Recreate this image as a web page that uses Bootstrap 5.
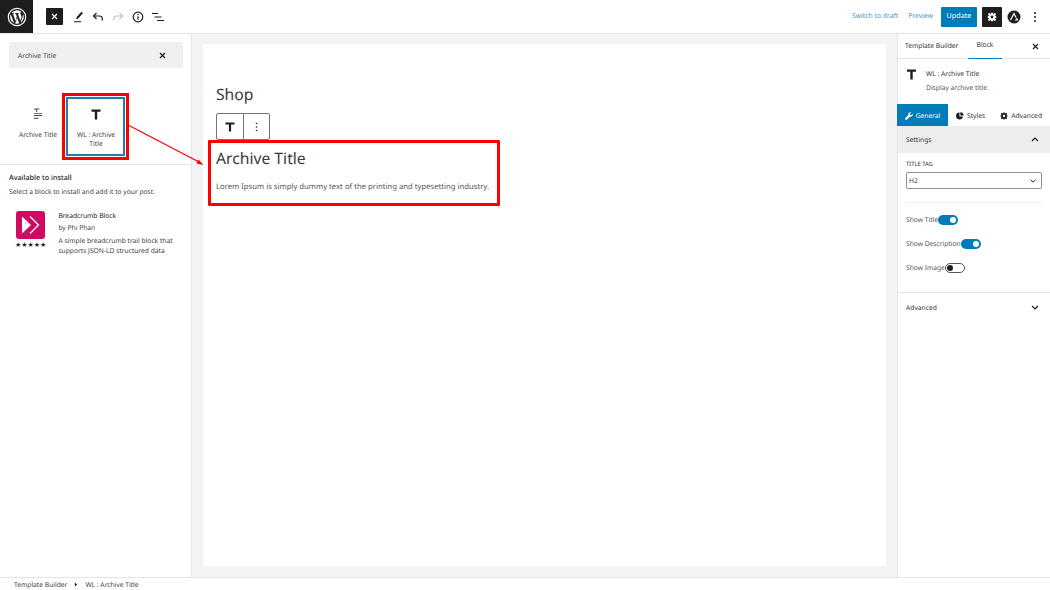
<!DOCTYPE html>
<html lang="en">
<head>
  <meta charset="UTF-8">
  <meta name="viewport" content="width=device-width, initial-scale=1.0">
  <title>Edit Template</title>
  <link href="https://cdn.jsdelivr.net/npm/bootstrap@5.3.0/dist/css/bootstrap.min.css" rel="stylesheet">
  <style>
    html, body { height: 590px; overflow: hidden; }
    body { font-family: "Noto Sans", "Open Sans", sans-serif; font-size: 6.7px; color: #1e1e1e; background: #fff; position: relative; text-rendering: geometricPrecision; }
    .wp-top { height: 34px; border-bottom: 1px solid #e4e4e4; padding-right: 13px; }
    .wp-logo { width: 33px; height: 33px; background: #1e1e1e; }
    .wp-close { width: 17px; height: 17px; background: #1e1e1e; border-radius: 1px; margin-left: 13px; margin-right: 10px; }
    .wp-tools { gap: 8px; }
    .wp-link { color: #4d94c0; font-size: 6.8px; }
    .wp-preview { margin-left: 10px; }
    .wp-update { background: #007cba; color: #fff; height: 20px; width: 36px; font-size: 7.2px; border-radius: 1px; margin-left: 8px; margin-right: 5px; }
    .wp-gear { width: 20px; height: 20px; background: #1e1e1e; border-radius: 1px; margin-right: 5px; }
    .wp-dots { margin-left: 12px; }
    .wp-main { height: 543px; }
    .wp-left { width: 192px; border-right: 1px solid #e4e4e4; }
    .wp-search { margin: 8px 8px 0 9px; height: 26px; background: #f0f0f0; padding: 0 17px 0 9px; color: #444; }
    .wp-search span, .wp-settings-h span, .wp-adv span, .wp-select span, .wp-foot span { padding-top: 2px; }
    .wp-results { padding-top: 40px; height: 97px; border-bottom: 1px solid #e4e4e4; }
    .wp-block-item { width: 58px; text-align: center; line-height: 9px; color: #444; }
    .wp-block-a { margin-left: 9px; }
    .wp-block-a svg { margin-bottom: 8px; }
    .wp-block-b { padding: 1px 8px 0 8px; }
    .wp-block-b svg { margin-bottom: 10px; }
    .wp-install { padding: 8px 9px; }
    .wp-install-h { font-size: 7.2px; font-weight: 500; margin-bottom: 4px; line-height: 10px; color: #222; }
    .wp-install-p { color: #444; line-height: 10px; margin-bottom: 14px; }
    .wp-plugin-icon { width: 29px; height: 28px; background: #d20962; border-radius: 3px; margin-left: 7px; }
    .wp-stars { font-size: 7px; letter-spacing: 0; line-height: 10px; margin-left: 6px; margin-top: 2px; color: #1e1e1e; white-space: nowrap; }
    .wp-plugin-text { margin-left: 12px; line-height: 10px; color: #444; }
    .wp-plugin-name { color: #222; margin-bottom: 2px; }
    .wp-plugin-by { margin-bottom: 3px; }
    .wp-canvas { background: #f3f3f3; padding: 10px 11px; }
    .wp-page { background: #fff; height: 522px; padding: 39px 13px 0 13px; }
    .wp-shop { font-size: 15.7px; font-weight: 400; line-height: 22px; color: #3a3a3a; margin: 0 0 8px 0; }
    .wp-blockbar { width: 54px; height: 27px; border: 1px solid #757575; border-radius: 2px; background: #fff; }
    .wp-blockbar > div { width: 27px; }
    .wp-blockbar > div + div { border-left: 1px solid #757575; }
    .wp-arch-h { font-size: 15.7px; font-weight: 400; line-height: 22px; color: #3a3a3a; margin: 7px 0 12px 0; }
    .wp-arch-p { font-size: 7.7px; color: #555; margin: 0; line-height: 12px; }
    .wp-right { width: 153px; border-left: 1px solid #e4e4e4; }
    .wp-tabs { height: 25px; border-bottom: 1px solid #e4e4e4; padding-right: 11px; }
    .wp-tab { height: 25px; color: #333; }
    .wp-tab-a { padding-left: 7px; width: 70px; }
    .wp-tab-b { width: 34px; justify-content: center; border-bottom: 1px solid #007cba; }
    .wp-card-info { padding: 10px 8px 0 8px; height: 45px; }
    .wp-card-info svg { margin-right: 9px; }
    .wp-card-name { color: #333; line-height: 10px; margin-bottom: 4px; }
    .wp-card-desc { color: #555; line-height: 10px; }
    .wp-subtabs { height: 22px; }
    .wp-subtab { height: 22px; color: #333; gap: 3px; padding-top: 2px; }
    .wp-subtab-on { background: #007cba; color: #fff; width: 51px; margin-left: -1px; justify-content: center; }
    .wp-settings-h { height: 27px; background: #ededed; padding: 0 11px 0 8px; color: #333; }
    .wp-settings { padding: 7px 8px 0 8px; height: 140px; border-bottom: 1px solid #e4e4e4; }
    .wp-label { font-size: 5.8px; line-height: 8px; margin-bottom: 4px; color: #333; }
    .wp-select { height: 17px; border: 1px solid #8c8f94; border-radius: 2px; padding: 0 5px 0 2px; color: #444; }
    .wp-sep { border-top: 1px solid #f0f0f0; margin: 13px 0 11px 0; }
    .wp-toggle-row { height: 11px; margin-bottom: 13px; color: #555; line-height: 11px; }
    .wp-toggle { width: 20px; height: 10px; border-radius: 5px; background: #007cba; position: relative; }
    .wp-toggle::after { content: ""; position: absolute; width: 6px; height: 6px; border-radius: 50%; background: #fff; right: 2px; top: 2px; }
    .wp-toggle-off { background: #fff; border: 1px solid #555; }
    .wp-toggle-off::after { background: #1e1e1e; left: 1px; right: auto; top: 1px; }
    .wp-adv { height: 28px; padding: 0 11px 0 8px; color: #333; }
    .wp-foot { height: 13px; border-top: 1px solid #e4e4e4; padding-left: 14px; color: #444; gap: 7px; }
    .wp-mark { position: absolute; border: 3px solid #f00; pointer-events: none; }
    .wp-mark-block { left: 62px; top: 93px; width: 67px; height: 67px; }
    .wp-mark-block::after { content: ""; position: absolute; left: 1px; top: 1px; right: 1px; bottom: 1px; border: 2px solid #1a7fb5; }
    .wp-mark-main { left: 208px; top: 140px; width: 292px; height: 66px; border-radius: 1px; }
    .wp-arrow { position: absolute; left: 125px; top: 120px; }
  </style>
</head>
<body>

  <!-- top toolbar -->
  <div class="wp-top d-flex align-items-center">
    <div class="wp-logo d-flex align-items-center justify-content-center">
      <svg width="20" height="20" viewBox="0 0 20 20"><circle cx="10" cy="10" r="8.7" fill="none" stroke="#fff" stroke-width="1.2"/><path fill="#fff" d="M3.2 10c0 2.7 1.6 5 3.9 6.1L3.8 7.2A6.800 6.800 0 0 0 3.200 10zm11.300-.3c0-.8-.3-1.400-.6-1.800-.3-.6-.6-1-.6-1.600 0-.6.500-1.200 1.200-1.200h.1A6.800 6.800 0 0 0 4.400 6.200h.5c.7 0 1.800-.1 1.800-.1.400 0 .4.500 0 .6l-.7.100 2.400 7.100 1.400-4.300-1-2.800-.7-.1c-.4 0-.3-.6 0-.6 0 0 1.100.1 1.800.1s1.800-.1 1.800-.1c.4 0 .4.500 0 .6l-.8.100 2.400 7 .7-2.200c.3-.9.500-1.500.5-2.100zM10.100 10.600l-2 5.800a6.800 6.800 0 0 0 4.200-.1l-.1-.1-2.100-5.600zm5.800-3.800c0 .2.100.4.100.7 0 .7-.1 1.400-.5 2.400l-2 5.900A6.800 6.800 0 0 0 15.900 6.800z"/></svg>
    </div>
    <div class="wp-close d-flex align-items-center justify-content-center">
      <svg width="7" height="7" viewBox="0 0 7 7"><path d="M1 1l5 5M6 1L1 6" stroke="#fff" stroke-width="1.200"/></svg>
    </div>
    <div class="wp-tools d-flex align-items-center">
      <svg width="11" height="12" viewBox="0 0 11 12"><path fill="#1e1e1e" d="M8.500.8l1.500 1.300-4.800 5.300-2 .8.500-2.100zM1 10.200h7v1.100H1z"/></svg>
      <svg width="12" height="10" viewBox="0 0 12 10"><path d="M4.500 1L1.500 4l3 3M1.500 4H7.500c1.600 0 2.800 1.200 2.800 2.800V8.500" fill="none" stroke="#1e1e1e" stroke-width="1.200"/></svg>
      <svg width="12" height="10" viewBox="0 0 12 10"><path d="M7.500 1l3 3-3 3M10.500 4H4.500C2.900 4 1.700 5.200 1.700 6.800V8.500" fill="none" stroke="#c4c4c4" stroke-width="1.200"/></svg>
      <svg width="12" height="12" viewBox="0 0 12 12"><circle cx="6" cy="6" r="4.800" fill="none" stroke="#1e1e1e" stroke-width="1.200"/><path d="M5.400 5.200h1.200v3.600H5.400zM5.400 3h1.200v1.200H5.400z" fill="#1e1e1e"/></svg>
      <svg width="12" height="10" viewBox="0 0 12 10"><path d="M0 1h6v1.100H0zM2.500 4.500h7v1.100h-7zM5 8h7v1.100H5z" fill="#1e1e1e"/></svg>
    </div>
    <div class="ms-auto d-flex align-items-center">
      <span class="wp-link">Switch to draft</span>
      <span class="wp-link wp-preview">Preview</span>
      <div class="wp-update d-flex align-items-center justify-content-center">Update</div>
      <div class="wp-gear d-flex align-items-center justify-content-center">
        <svg width="10" height="10" viewBox="0 0 12 12"><path fill="#fff" fill-rule="evenodd" d="M5 .8h2l.3 1.500 1-.4 1.200-.8 1.400 1.400-.8 1.200-.4 1L11.200 5v2l-1.500.3.400 1 .8 1.200-1.400 1.400-1.200-.8-1-.4L7 11.200H5l-.3-1.500-1 .4-1.200.8-1.400-1.400.8-1.200.4-1L.8 7V5l1.500-.3-.4-1-.8-1.200 1.400-1.400 1.200.8 1 .4zM6 4.300a1.700 1.700 0 1 0 0 3.400 1.700 1.700 0 0 0 0-3.400z"/></svg>
      </div>
      <svg width="14" height="14" viewBox="0 0 14 14"><circle cx="7" cy="7" r="6.500" fill="#1e1e1e"/><path d="M3.500 10L7 3.500 9 7.500M8 10h2.500L9.500 8" fill="none" stroke="#fff" stroke-width="1.200"/></svg>
      <svg class="wp-dots" width="4" height="12" viewBox="0 0 4 12"><circle cx="2" cy="2" r="1" fill="#1e1e1e"/><circle cx="2" cy="6" r="1" fill="#1e1e1e"/><circle cx="2" cy="10" r="1" fill="#1e1e1e"/></svg>
    </div>
  </div>

  <div class="wp-main d-flex">
    <!-- inserter -->
    <div class="wp-left flex-shrink-0">
      <div class="wp-search d-flex align-items-center justify-content-between">
        <span>Archive Title</span>
        <svg width="7" height="7" viewBox="0 0 7 7"><path d="M1 1l5 5M6 1L1 6" stroke="#1e1e1e" stroke-width="1.200"/></svg>
      </div>
      <div class="wp-results d-flex">
        <div class="wp-block-item wp-block-a">
          <svg class="d-block mx-auto" width="11" height="14" viewBox="0 0 12 14"><path d="M1 0h6v1H4.500v3h-1V1H1zM1 5h9v1H1zM1 7h9v1H1zM1 10h5v1H1z" fill="#444"/></svg>
          Archive Title
        </div>
        <div class="wp-block-item wp-block-b">
          <svg class="d-block mx-auto" width="10" height="11" viewBox="0 0 10 11"><path d="M.5.500h9v2.200H6.200V10.500H3.800V2.700H.5z" fill="#1e1e1e"/></svg>
          WL : Archive Title
        </div>
      </div>
      <div class="wp-install">
        <div class="wp-install-h">Available to install</div>
        <div class="wp-install-p">Select a block to install and add it to your post.</div>
        <div class="d-flex">
          <div class="flex-shrink-0">
            <div class="wp-plugin-icon d-flex align-items-center justify-content-center">
              <svg width="20" height="20" viewBox="0 0 20 20"><path d="M1 1.500L10 10 1 18.500z" fill="#fff"/><path d="M9 1.500L17.500 10 9 18.500" fill="none" stroke="#fff" stroke-width="1.300"/></svg>
            </div>
            <div class="wp-stars">★★★★★</div>
          </div>
          <div class="wp-plugin-text">
            <div class="wp-plugin-name">Breadcrumb Block</div>
            <div class="wp-plugin-by">by Phi Phan</div>
            <div>A simple breadcrumb trail block that<br>supports JSON-LD structured data</div>
          </div>
        </div>
      </div>
    </div>

    <!-- editor canvas -->
    <div class="wp-canvas flex-grow-1">
      <div class="wp-page">
        <h2 class="wp-shop">Shop</h2>
        <div class="wp-blockbar d-flex">
          <div class="d-flex align-items-center justify-content-center">
            <svg width="10" height="10" viewBox="0 0 10 10"><path d="M.5.500h9v2H6.100V9.500H3.900V2.500H.5z" fill="#1e1e1e"/></svg>
          </div>
          <div class="d-flex align-items-center justify-content-center">
            <svg width="3" height="10" viewBox="0 0 3 10"><circle cx="1.500" cy="1.500" r=".8" fill="#1e1e1e"/><circle cx="1.500" cy="5" r=".8" fill="#1e1e1e"/><circle cx="1.500" cy="8.500" r=".8" fill="#1e1e1e"/></svg>
          </div>
        </div>
        <h2 class="wp-arch-h">Archive Title</h2>
        <p class="wp-arch-p">Lorem Ipsum is simply dummy text of the printing and typesetting industry.</p>
      </div>
    </div>

    <!-- settings sidebar -->
    <div class="wp-right flex-shrink-0">
      <div class="wp-tabs d-flex align-items-center">
        <div class="wp-tab wp-tab-a d-flex align-items-center">Template Builder</div>
        <div class="wp-tab wp-tab-b d-flex align-items-center">Block</div>
        <svg class="ms-auto" width="7" height="7" viewBox="0 0 7 7"><path d="M1 1l5 5M6 1L1 6" stroke="#1e1e1e" stroke-width="1.200"/></svg>
      </div>
      <div class="wp-card-info d-flex">
        <svg class="flex-shrink-0" width="11" height="11" viewBox="0 0 10 11"><path d="M.5.500h9v2.200H6.200V10.500H3.800V2.700H.5z" fill="#1e1e1e"/></svg>
        <div>
          <div class="wp-card-name">WL : Archive Title</div>
          <div class="wp-card-desc">Display archive title.</div>
        </div>
      </div>
      <div class="wp-subtabs d-flex">
        <div class="wp-subtab wp-subtab-on d-flex align-items-center">
          <svg width="8" height="8" viewBox="0 0 8 8"><path d="M7.600 1.800L6 3.200 4.900 3 4.700 2 6.200.4A2.200 2.200 0 0 0 3.300 3L.4 6a1 1 0 0 0 1.500 1.500L4.900 4.700A2.200 2.200 0 0 0 7.600 1.800z" fill="#fff"/></svg>
          General
        </div>
        <div class="wp-subtab d-flex align-items-center ms-2">
          <svg width="8" height="8" viewBox="0 0 8 8"><path d="M3.500.5a3.500 3.500 0 1 0 3.500 4H3.500zM4.300.3v3.300h3.400A3.500 3.500 0 0 0 4.300.3z" fill="#1e1e1e"/></svg>
          Styles
        </div>
        <div class="wp-subtab d-flex align-items-center ms-auto me-2">
          <svg width="8" height="8" viewBox="0 0 12 12"><path fill="#1e1e1e" fill-rule="evenodd" d="M5 .8h2l.3 1.500 1-.4 1.200-.8 1.400 1.400-.8 1.200-.4 1L11.200 5v2l-1.500.3.400 1 .8 1.200-1.400 1.400-1.200-.8-1-.4L7 11.200H5l-.3-1.500-1 .4-1.200.8-1.400-1.400.8-1.200.4-1L.8 7V5l1.500-.3-.4-1-.8-1.200 1.400-1.400 1.200.8 1 .4zM6 4.300a1.700 1.700 0 1 0 0 3.400 1.700 1.700 0 0 0 0-3.400z"/></svg>
          Advanced
        </div>
      </div>
      <div class="wp-settings-h d-flex align-items-center justify-content-between">
        <span>Settings</span>
        <svg width="8" height="5" viewBox="0 0 8 5"><path d="M1 4l3-3 3 3" fill="none" stroke="#1e1e1e" stroke-width="1.200"/></svg>
      </div>
      <div class="wp-settings">
        <div class="wp-label">TITLE TAG</div>
        <div class="wp-select d-flex align-items-center justify-content-between">
          <span>H2</span>
          <svg width="6" height="4" viewBox="0 0 6 4"><path d="M.5 .8L3 3.200 5.500 .8" fill="none" stroke="#1e1e1e" stroke-width="1"/></svg>
        </div>
        <div class="wp-sep"></div>
        <div class="wp-toggle-row d-flex align-items-center"><span>Show Title</span><div class="wp-toggle"></div></div>
        <div class="wp-toggle-row d-flex align-items-center"><span>Show Description</span><div class="wp-toggle"></div></div>
        <div class="wp-toggle-row d-flex align-items-center"><span>Show Image</span><div class="wp-toggle wp-toggle-off"></div></div>
      </div>
      <div class="wp-adv d-flex align-items-center justify-content-between">
        <span>Advanced</span>
        <svg width="8" height="5" viewBox="0 0 8 5"><path d="M1 1l3 3 3-3" fill="none" stroke="#1e1e1e" stroke-width="1.200"/></svg>
      </div>
    </div>
  </div>

  <div class="wp-foot d-flex align-items-center">
    <span>Template Builder</span>
    <svg width="4" height="5" viewBox="0 0 4 5"><path d="M.8.500L3.200 2.500.8 4.500z" fill="#1e1e1e"/></svg>
    <span>WL : Archive Title</span>
  </div>

  <!-- red annotation over the screenshot -->
  <div class="wp-mark wp-mark-block"></div>
  <div class="wp-mark wp-mark-main"></div>
  <svg class="wp-arrow" width="90" height="50" viewBox="0 0 90 50"><path d="M4 5.500L74 42" stroke="#f00" stroke-width="1.300"/><path d="M78.500 45L71.500 43.500 73.500 39.500z" fill="#f00"/></svg>

  <script src="https://cdn.jsdelivr.net/npm/bootstrap@5.3.0/dist/js/bootstrap.bundle.min.js"></script>
</body>
</html>
